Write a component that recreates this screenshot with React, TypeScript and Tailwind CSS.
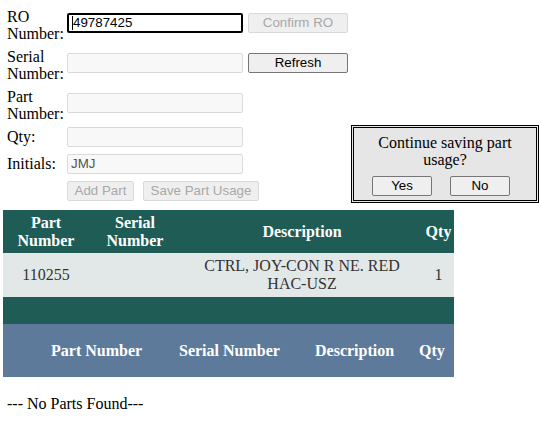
import React from "react";

const serif = "font-['Liberation_Serif','Times_New_Roman',serif]";
const sans = "font-['Liberation_Sans',Arial,sans-serif]";

function Field({ value = "", focused = false }: { value?: string; focused?: boolean }) {
  return (
    <div
      className={
        "w-[176px] h-5 rounded-[2px] flex items-center px-[3px] text-[13.33px] " +
        sans +
        (focused
          ? " border-2 border-black bg-white text-black px-[2px]"
          : " border border-[#dadada] bg-[#f8f8f8] text-[#545454]")
      }
    >
      {focused && <span className="w-px h-[14px] bg-black" />}
      {value}
    </div>
  );
}

function Btn({ label, disabled = false, w }: { label: string; disabled?: boolean; w: string }) {
  return (
    <div
      className={
        `${w} h-5 rounded-[2px] flex items-center justify-center text-[13.33px] ${sans} ` +
        (disabled
          ? "border border-[#d9d9d9] bg-[#efefef] text-[#a8a8a8]"
          : "border border-[#767676] bg-[#efefef] text-black")
      }
    >
      {label}
    </div>
  );
}

function Row({ h, label, children, twoLine = false }: { h: string; label: React.ReactNode; children?: React.ReactNode; twoLine?: boolean }) {
  return (
    <div className={`${h} flex items-center`}>
      <div className={"w-[60px] text-[16px] " + (twoLine ? "leading-[17px] pt-[4px]" : "leading-[18px]")}>{label}</div>
      <div className="flex items-center gap-[5px]">{children}</div>
    </div>
  );
}

export default function App() {
  return (
    <div className={`relative w-[539px] h-[429px] bg-white text-black ${serif}`}>
      {/* form */}
      <div className="pt-[3px] pl-[7px]">
        <Row h="h-10" twoLine label={<>RO<br />Number:</>}>
          <Field value="49787425" focused />
          <Btn label="Confirm RO" disabled w="w-[100px]" />
        </Row>
        <Row h="h-10" twoLine label={<>Serial<br />Number:</>}>
          <Field />
          <Btn label="Refresh" w="w-[100px]" />
        </Row>
        <Row h="h-10" twoLine label={<>Part<br />Number:</>}>
          <Field />
        </Row>
        <Row h="h-[28px]" label="Qty:">
          <Field />
        </Row>
        <Row h="h-[26px]" label="Initials:">
          <Field value="JMJ" />
        </Row>
        <div className="h-[28px] flex items-center pl-[60px] gap-[9px]">
          <Btn label="Add Part" disabled w="w-[67px]" />
          <Btn label="Save Part Usage" disabled w="w-[116px]" />
        </div>
      </div>

      {/* parts table */}
      <div className="mt-[5px] ml-[3px] w-[451px]">
        <div className="h-[43px] bg-[#1e5c55] text-white font-bold text-[16px] leading-[18px] flex items-center text-center">
          <div className="w-[86px]">Part<br />Number</div>
          <div className="w-[92px]">Serial<br />Number</div>
          <div className="w-[242px]">Description</div>
          <div className="w-[31px]">Qty</div>
        </div>
        <div className="h-[44px] bg-[#e2e8e8] text-[#333] text-[16px] leading-[18px] flex items-center text-center">
          <div className="w-[86px]">110255</div>
          <div className="w-[92px]" />
          <div className="w-[242px] px-[20px]">CTRL, JOY-CON R NE. RED HAC-USZ</div>
          <div className="w-[31px]">1</div>
        </div>
        <div className="h-[27px] bg-[#1e5c55]" />
        <div className="h-[53px] bg-[#5e7a9b] text-white font-bold text-[16px] flex items-center">
          <div className="w-[48px]" />
          <div className="w-[128px]">Part Number</div>
          <div className="w-[136px]">Serial Number</div>
          <div className="w-[104px]">Description</div>
          <div>Qty</div>
        </div>
      </div>

      <div className="mt-[15px] pl-[7px] text-[16px]">--- No Parts Found---</div>

      {/* confirm dialog */}
      <div className="absolute left-[351px] top-[125px] w-[188px] h-[78px] border-[3px] border-double border-black bg-[#e6e6e6] flex flex-col">
        <div className="mt-[6px] mx-auto text-[16px] leading-[17px] text-center w-[150px]">
          Continue saving part usage?
        </div>
        <div className="mt-[8px] ml-[18px] flex gap-[18px]">
          <Btn label="Yes" w="w-[60px]" />
          <Btn label="No" w="w-[60px]" />
        </div>
      </div>
    </div>
  );
}
